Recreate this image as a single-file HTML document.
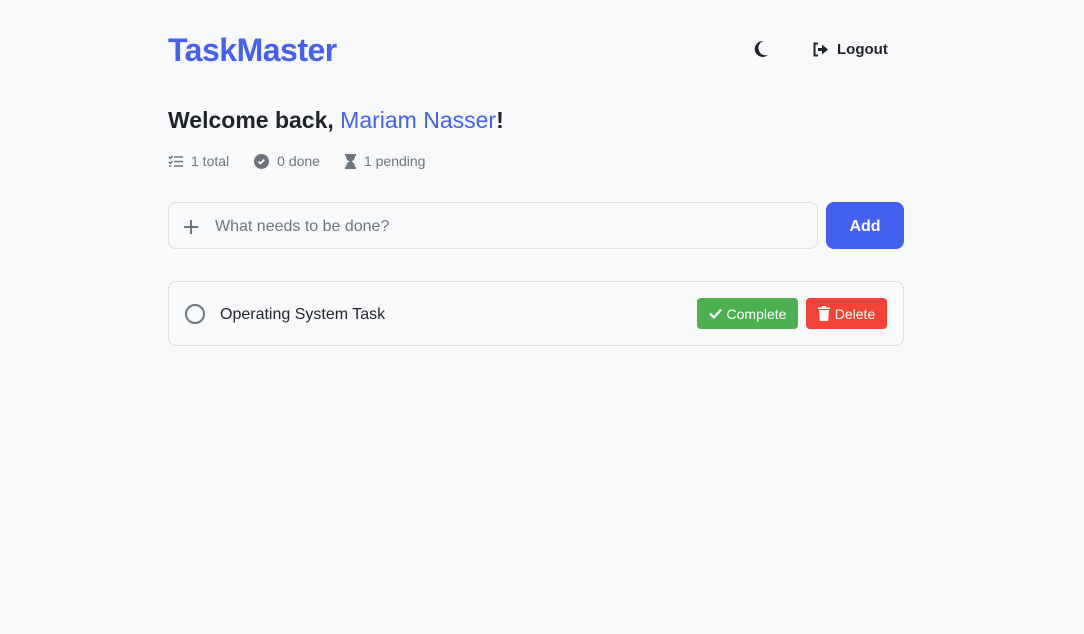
<!DOCTYPE html>
<html><head><meta charset="utf-8"><style>
*{box-sizing:border-box;margin:0;padding:0}
body{width:1084px;height:634px;background:#f8f9fb;font-family:"Liberation Sans",sans-serif;color:#1f2328;position:relative;overflow:hidden}
.abs{position:absolute}
.logo{left:168px;top:32px;font-size:32px;font-weight:bold;color:#4361ee;letter-spacing:-0.5px}
.moon{left:752px;top:40px}
.logout{left:812px;top:41px;font-size:15px;font-weight:bold;display:flex;align-items:center;gap:8px}
.welcome{left:168px;top:107px;font-size:23px;font-weight:bold}
.welcome span{color:#4361ee;font-weight:normal}
.stats{left:168px;top:153px;font-size:14px;color:#6c757d;display:flex;gap:25px}
.stats div{display:flex;align-items:center;gap:8px}
.input{left:168px;top:202px;width:650px;height:47px;border:1px solid #dcdfe4;border-radius:8px;background:#f8f9fb;display:flex;align-items:center;padding-left:14px;padding-top:2px;font-size:16px;color:#6c757d}
.add{left:826px;top:202px;width:78px;height:47px;background:#4361ee;border-radius:8px;color:#fff;font-weight:bold;font-size:16px;display:flex;align-items:center;justify-content:center;padding-top:2px}
.task{left:168px;top:281px;width:736px;height:65px;border:1px solid #dcdfe4;border-radius:8px;background:#f8f9fb}
.tname{left:220px;top:306px;font-size:16px}
.btn{top:298px;height:31px;border-radius:4px;color:#fff;font-size:14px;display:flex;align-items:center;justify-content:center;gap:5px}
.comp{left:697px;width:101px;background:#4caf50}
.del{left:806px;width:81px;background:#f44336}
</style></head><body>
<div class="abs logo">TaskMaster</div>
<svg class="abs moon" width="17" height="18" viewBox="0 0 16 18"><path d="M11 1A8 8 0 1 0 15.5 15A6 6 0 0 1 11 1Z" fill="#1f2328"/></svg>
<div class="abs logout"><svg width="17" height="15" viewBox="0 0 17 15"><path d="M6 1.5H2.5V13.5H6" fill="none" stroke="#1f2328" stroke-width="2"/><path d="M6 6H10V2.5L16 7.5L10 12.5V9H6Z" fill="#1f2328"/></svg>Logout</div>
<div class="abs welcome">Welcome back, <span>Mariam Nasser</span>!</div>
<div class="abs stats">
<div><svg width="15" height="12" viewBox="0 0 15 12"><path d="M1 2l1.3 1.3L4.5 1M1 7l1.3 1.3L4.5 6M1 11h2M6 2h9M6 6.5h9M6 11h9" stroke="#6c757d" stroke-width="1.6" fill="none"/></svg>1 total</div>
<div><svg width="15" height="15" viewBox="0 0 15 15"><circle cx="7.5" cy="7.5" r="7.5" fill="#6c757d"/><path d="M4.5 7.5l2 2 3.8-4" stroke="#fff" stroke-width="1.7" fill="none"/></svg>0 done</div>
<div><svg width="11" height="15" viewBox="0 0 11 15"><path d="M0 0h11v2H10Q10 6 6.5 7.5Q10 9 10 13H11v2H0v-2H1Q1 9 4.5 7.5Q1 6 1 2H0Z" fill="#6c757d"/></svg>1 pending</div>
</div>
<div class="abs input"><svg width="16" height="16" viewBox="0 0 16 16"><path d="M8 1v14M1 8h14" stroke="#6c757d" stroke-width="2"/></svg><span style="margin-left:16px">What needs to be done?</span></div>
<div class="abs add">Add</div>
<div class="abs task"></div>
<svg class="abs" style="left:184px;top:303px" width="22" height="22"><circle cx="11" cy="11" r="9" fill="none" stroke="#6c757d" stroke-width="2"/></svg>
<div class="abs tname">Operating System Task</div>
<div class="abs btn comp"><svg width="13" height="11" viewBox="0 0 13 11"><path d="M1 5.5l4 4L12 1.5" stroke="#fff" stroke-width="2.3" fill="none"/></svg>Complete</div>
<div class="abs btn del"><svg width="12" height="15" viewBox="0 0 12 15"><path d="M0 1.5h4V0h4v1.5h4V3H0Z M1 4h10l-0.8 11H1.8Z" fill="#fff"/></svg>Delete</div>
</body></html>
